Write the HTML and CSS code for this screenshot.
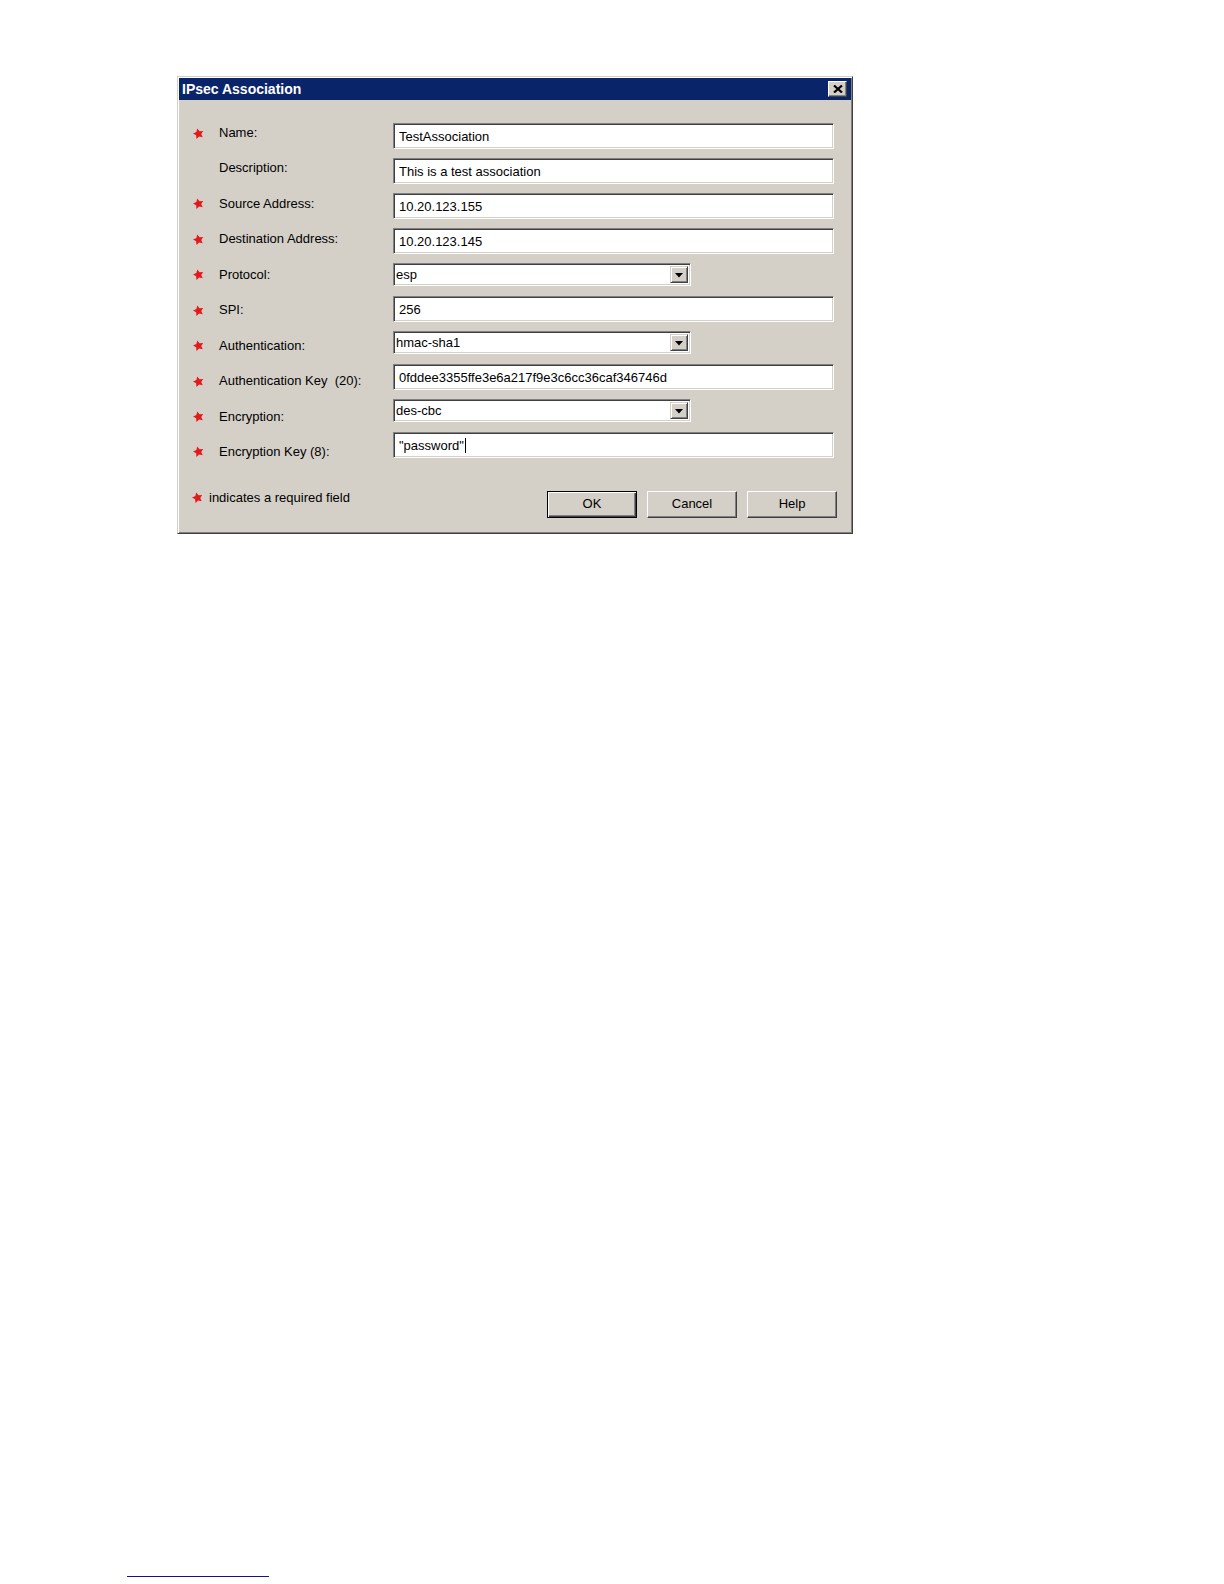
FILE: index.html
```html
<!DOCTYPE html>
<html lang="en">
<head>
<meta charset="utf-8">
<title>IPsec Association</title>
<link rel="stylesheet" href="styles.css">
</head>
<body>
<div class="page">
  <div class="dialog">
    <div class="titlebar">
      <span class="title">IPsec Association</span>
      <span class="close-btn"><svg width="10" height="8" viewBox="0 0 10 8"><path d="M1 0.5 L9 7.5 M9 0.5 L1 7.5" stroke="#000" stroke-width="2.2"/></svg></span>
    </div>
    <div class="body">
      <div class="form">
        <div class="labels">
          <div class="label"><span class="star"><svg width="11" height="11" viewBox="0 0 10 10"><polygon transform="rotate(-14 5 5.3)" points="5,0.3 6.47,3.28 9.76,3.76 7.38,6.08 7.94,9.35 5,7.8 2.06,9.35 2.62,6.08 0.24,3.76 3.53,3.28" fill="#e3191b"/></svg></span><span>Name:</span></div>
          <div class="label"><span class="star"></span><span>Description:</span></div>
          <div class="label"><span class="star"><svg width="11" height="11" viewBox="0 0 10 10"><polygon transform="rotate(-14 5 5.3)" points="5,0.3 6.47,3.28 9.76,3.76 7.38,6.08 7.94,9.35 5,7.8 2.06,9.35 2.62,6.08 0.24,3.76 3.53,3.28" fill="#e3191b"/></svg></span><span>Source Address:</span></div>
          <div class="label"><span class="star"><svg width="11" height="11" viewBox="0 0 10 10"><polygon transform="rotate(-14 5 5.3)" points="5,0.3 6.47,3.28 9.76,3.76 7.38,6.08 7.94,9.35 5,7.8 2.06,9.35 2.62,6.08 0.24,3.76 3.53,3.28" fill="#e3191b"/></svg></span><span>Destination Address:</span></div>
          <div class="label"><span class="star"><svg width="11" height="11" viewBox="0 0 10 10"><polygon transform="rotate(-14 5 5.3)" points="5,0.3 6.47,3.28 9.76,3.76 7.38,6.08 7.94,9.35 5,7.8 2.06,9.35 2.62,6.08 0.24,3.76 3.53,3.28" fill="#e3191b"/></svg></span><span>Protocol:</span></div>
          <div class="label"><span class="star"><svg width="11" height="11" viewBox="0 0 10 10"><polygon transform="rotate(-14 5 5.3)" points="5,0.3 6.47,3.28 9.76,3.76 7.38,6.08 7.94,9.35 5,7.8 2.06,9.35 2.62,6.08 0.24,3.76 3.53,3.28" fill="#e3191b"/></svg></span><span>SPI:</span></div>
          <div class="label"><span class="star"><svg width="11" height="11" viewBox="0 0 10 10"><polygon transform="rotate(-14 5 5.3)" points="5,0.3 6.47,3.28 9.76,3.76 7.38,6.08 7.94,9.35 5,7.8 2.06,9.35 2.62,6.08 0.24,3.76 3.53,3.28" fill="#e3191b"/></svg></span><span>Authentication:</span></div>
          <div class="label"><span class="star"><svg width="11" height="11" viewBox="0 0 10 10"><polygon transform="rotate(-14 5 5.3)" points="5,0.3 6.47,3.28 9.76,3.76 7.38,6.08 7.94,9.35 5,7.8 2.06,9.35 2.62,6.08 0.24,3.76 3.53,3.28" fill="#e3191b"/></svg></span><span>Authentication Key&nbsp;&nbsp;(20):</span></div>
          <div class="label"><span class="star"><svg width="11" height="11" viewBox="0 0 10 10"><polygon transform="rotate(-14 5 5.3)" points="5,0.3 6.47,3.28 9.76,3.76 7.38,6.08 7.94,9.35 5,7.8 2.06,9.35 2.62,6.08 0.24,3.76 3.53,3.28" fill="#e3191b"/></svg></span><span>Encryption:</span></div>
          <div class="label"><span class="star"><svg width="11" height="11" viewBox="0 0 10 10"><polygon transform="rotate(-14 5 5.3)" points="5,0.3 6.47,3.28 9.76,3.76 7.38,6.08 7.94,9.35 5,7.8 2.06,9.35 2.62,6.08 0.24,3.76 3.53,3.28" fill="#e3191b"/></svg></span><span>Encryption Key (8):</span></div>
        </div>
        <div class="fields">
          <div class="input">TestAssociation</div>
          <div class="input">This is a test association</div>
          <div class="input">10.20.123.155</div>
          <div class="input">10.20.123.145</div>
          <div class="select-slot"><div class="select"><span class="select-value">esp</span><span class="arrow-btn"><svg width="8" height="5" viewBox="0 0 8 5"><polygon points="0,0 8,0 4,4.5" fill="#000"/></svg></span></div></div>
          <div class="input">256</div>
          <div class="select-slot"><div class="select"><span class="select-value">hmac-sha1</span><span class="arrow-btn"><svg width="8" height="5" viewBox="0 0 8 5"><polygon points="0,0 8,0 4,4.5" fill="#000"/></svg></span></div></div>
          <div class="input">0fddee3355ffe3e6a217f9e3c6cc36caf346746d</div>
          <div class="select-slot"><div class="select"><span class="select-value">des-cbc</span><span class="arrow-btn"><svg width="8" height="5" viewBox="0 0 8 5"><polygon points="0,0 8,0 4,4.5" fill="#000"/></svg></span></div></div>
          <div class="input">"password"<span class="caret"></span></div>
        </div>
      </div>
      <div class="footer">
        <div class="note"><span class="note-star"><svg width="11" height="11" viewBox="0 0 10 10"><polygon transform="rotate(-14 5 5.3)" points="5,0.3 6.47,3.28 9.76,3.76 7.38,6.08 7.94,9.35 5,7.8 2.06,9.35 2.62,6.08 0.24,3.76 3.53,3.28" fill="#e3191b"/></svg></span><span>indicates a required field</span></div>
        <div class="buttons">
          <span class="btn btn-default">OK</span>
          <span class="btn">Cancel</span>
          <span class="btn">Help</span>
        </div>
      </div>
    </div>
  </div>
  <div class="rule"></div>
</div>
</body>
</html>
```

FILE: styles.css
```css
html, body {
  margin: 0;
  padding: 0;
  background: #ffffff;
}

body {
  font-family: "Liberation Sans", Arial, sans-serif;
  font-size: 13px;
  color: #000;
}

.page {
  padding-top: 76px;
  display: flex;
  flex-direction: column;
  align-items: flex-start;
}

.dialog {
  margin-left: 177px;
  width: 672px;
  padding: 1px;
  border: 1px solid;
  border-color: #d4d0c8 #404040 #404040 #d4d0c8;
  box-shadow: inset 1px 1px #ffffff, inset -1px -1px #808080;
  background: #d4d0c8;
}

.titlebar {
  height: 22px;
  background: #0a246a;
  display: flex;
  align-items: center;
  justify-content: space-between;
  padding: 0 4px 0 3px;
}

.title {
  color: #ffffff;
  font-weight: bold;
  font-size: 14px;
  line-height: 16px;
}

.close-btn {
  width: 19px;
  height: 16px;
  box-sizing: border-box;
  background: #d4d0c8;
  border: 1px solid;
  border-color: #ffffff #404040 #404040 #ffffff;
  box-shadow: inset -1px -1px #808080;
  display: flex;
  align-items: center;
  justify-content: center;
}

.close-btn svg {
  display: block;
}

.body {
  padding: 23px 14px 14px 14px;
}

.form {
  display: grid;
  grid-template-columns: 200px 441px;
  align-items: start;
}

.labels {
  display: flex;
  flex-direction: column;
  gap: 19.44px;
  padding-top: 2px;
}

.label {
  display: flex;
  align-items: center;
  height: 16px;
  line-height: 16px;
  white-space: nowrap;
}

.star {
  width: 11px;
  height: 11px;
  margin-right: 15px;
  flex: none;
}

.star svg, .note-star svg {
  display: block;
}

.fields {
  display: flex;
  flex-direction: column;
  gap: 9px;
}

.input {
  height: 26px;
  box-sizing: border-box;
  background: #ffffff;
  border: 1px solid;
  border-color: #808080 #ffffff #ffffff #808080;
  box-shadow: inset 1px 1px #404040, inset -1px -1px #d4d0c8;
  padding: 0 6px 0 5px;
  display: flex;
  align-items: center;
  white-space: nowrap;
}

.caret {
  display: inline-block;
  width: 0;
  height: 15px;
  border-left: 1px solid #000;
  margin-left: 1px;
}

.select-slot {
  height: 24px;
}

.select {
  width: 298px;
  height: 23px;
  box-sizing: border-box;
  background: #ffffff;
  border: 1px solid;
  border-color: #808080 #ffffff #ffffff #808080;
  box-shadow: inset 1px 1px #404040, inset -1px -1px #d4d0c8;
  padding: 2px;
  display: flex;
  align-items: stretch;
  justify-content: space-between;
}

.select-value {
  display: flex;
  align-items: center;
}

.arrow-btn {
  width: 18px;
  box-sizing: border-box;
  background: #d4d0c8;
  border: 1px solid;
  border-color: #d4d0c8 #404040 #404040 #d4d0c8;
  box-shadow: inset 1px 1px #ffffff, inset -1px -1px #808080;
  display: flex;
  align-items: center;
  justify-content: center;
  padding-top: 1px;
}

.arrow-btn svg {
  display: block;
}

.footer {
  margin-top: 31px;
  display: flex;
  justify-content: space-between;
  align-items: flex-start;
}

.note {
  display: flex;
  align-items: center;
  line-height: 16px;
  margin-top: -1px;
  margin-left: -1px;
}

.note-star {
  width: 11px;
  height: 11px;
  margin-right: 6px;
}

.buttons {
  display: flex;
  gap: 10px;
}

.btn {
  width: 90px;
  height: 27px;
  box-sizing: border-box;
  background: #d4d0c8;
  border: 1px solid;
  border-color: #ffffff #404040 #404040 #ffffff;
  box-shadow: inset -1px -1px #808080;
  display: flex;
  align-items: center;
  justify-content: center;
  padding-bottom: 1px;
}

.btn-default {
  border: 1px solid #000;
  box-shadow: inset 1px 1px #ffffff, inset -1px -1px #404040, inset -2px -2px #808080;
}

.rule {
  margin-top: 1042px;
  margin-left: 127px;
  width: 142px;
  height: 1px;
  background: #14148a;
}
```
